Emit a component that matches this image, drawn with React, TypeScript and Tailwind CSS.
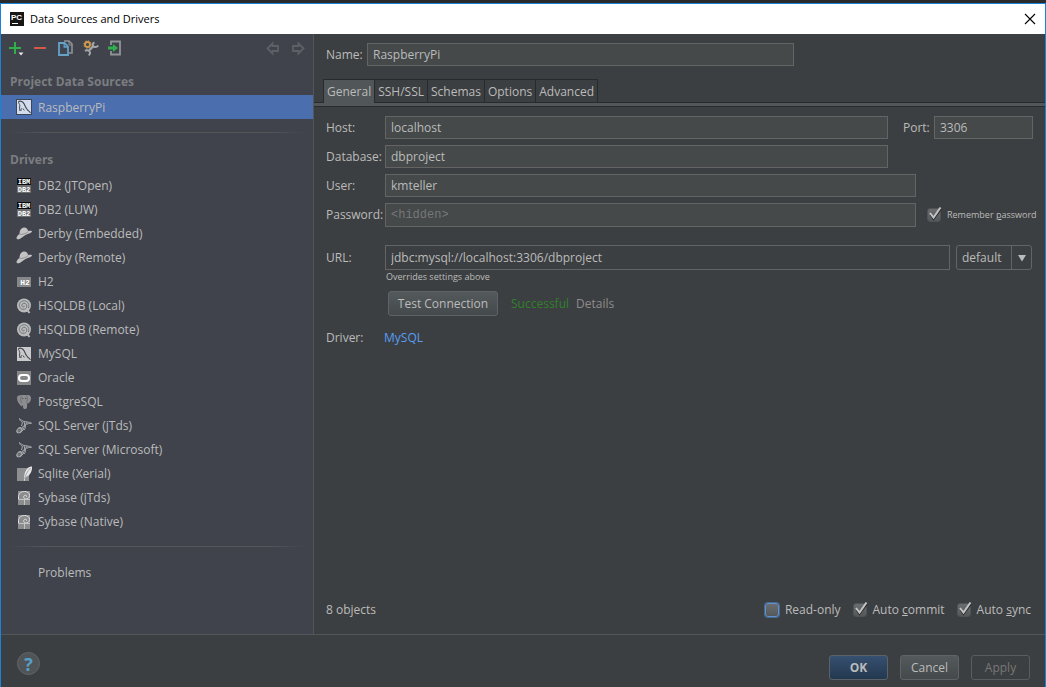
import type { ReactNode } from 'react';

const FONT = 'font-["Open_Sans","Noto_Sans",sans-serif]';

function Db2Icon() {
  return (
    <svg width="16" height="16" viewBox="0 0 16 16">
      <rect x="1" y="0" width="14" height="7" fill="#0c0c0c" />
      <rect x="1" y="7" width="14" height="8" fill="#6c6e70" />
      <text x="8" y="6" textAnchor="middle" fontSize="7" fontWeight="700" fill="#fff" fontFamily="Liberation Mono">IBM</text>
      <text x="8" y="14" textAnchor="middle" fontSize="7" fontWeight="700" fill="#fff" fontFamily="Liberation Mono">DB2</text>
    </svg>
  );
}

function DerbyIcon() {
  return (
    <svg width="16" height="16" viewBox="0 0 16 16">
      <path d="M3.500 8C3.300 5 5 2.200 7.600 1.600c2.600-.3 4 1.200 4.500 3.400 1.500-.1 3-.4 4 .2-.4 1.800-3 2.300-5.500 3.300C7.500 9.600 5 13.400 1.700 13.300-.2 13 0 10.500 3.500 8z" fill="#c3c3c3" />
      <path d="M3.600 8.300c2.800.5 6-.5 8.400-2.600" stroke="#85888b" strokeWidth=".8" fill="none" />
    </svg>
  );
}

function H2Icon() {
  return (
    <svg width="16" height="16" viewBox="0 0 16 16">
      <rect x="1" y="3" width="14" height="10" fill="#858789" />
      <text x="9" y="11" textAnchor="middle" fontSize="8" fontWeight="700" fill="#fff" fontFamily="Liberation Mono">H2</text>
    </svg>
  );
}

function HsqlIcon() {
  return (
    <svg width="16" height="16" viewBox="0 0 16 16" fill="none">
      <circle cx="8" cy="7.500" r="7" fill="#b9babb" />
      <path d="M8 7.600c.8.600-.2 1.700-1.200 1.200C5.200 8 5.700 5.400 8 5.300c2.300 0 3.300 2.200 2.600 4-.8 2.100-3.600 2.600-5.400 1.500-2.300-1.500-2.500-5-.5-6.800C7 2 10.800 2.500 12.200 5.200c.8 1.500.9 3.200.2 4.800" stroke="#707377" strokeWidth="1" />
      <path d="M11 11.500l2.500 3.500" stroke="#b9babb" strokeWidth="2" />
    </svg>
  );
}

function MySqlIcon({ selected }: { selected?: boolean }) {
  return (
    <svg width="16" height="16" viewBox="0 0 16 16" fill="none">
      {selected && <rect width="16" height="16" fill="#3b4658" />}
      <rect x="1" y="1" width="14" height="14" fill={selected ? '#d3dced' : '#c9cacc'} />
      <path d="M2.500 2.500C4.500 1.500 7 2.500 8.200 5c1 2.200 1.500 3.800 3 5.500.9 1.200 2.300 2 3.300 3.500" stroke="#404349" strokeWidth="1.100" />
      <path d="M2.500 2.500c-.2 1.500 1.200 2.500 1.300 4-.1 1.800-.6 3.500.2 5.500M5 12c-.4-1.500.2-2.500 1-2.500M7 9.500c.2 1 .8 1.500 1.500 1.700" stroke="#404349" strokeWidth="1" />
    </svg>
  );
}

function OracleIcon() {
  return (
    <svg width="16" height="16" viewBox="0 0 16 16" fill="none">
      <rect x="1" y="1" width="14" height="14" fill="#858789" />
      <rect x="3" y="5" width="10" height="6" rx="3" stroke="#fff" strokeWidth="2" />
    </svg>
  );
}

function PostgresIcon() {
  return (
    <svg width="16" height="16" viewBox="0 0 16 16">
      <path d="M1 4c0-2 1.500-3 3.500-2.800C6 .8 9 .8 10.500 1.300 13 .6 15 1.700 15 4c0 2-1 4-2 5-.8.7-1.700.4-2 .2V13c0 1.500-.9 2-2 2s-2-.5-2-2v-2.500C6.600 12 5.800 12.500 5 12 3 10 1 7 1 4z" fill="#8b8d8f" />
      <path d="M5.500 2c-1 2-.8 4.500-.2 7M10.500 2c1.500 2 .5 4.500.3 7" stroke="#63666a" strokeWidth=".8" fill="none" />
      <path d="M6.300 4.500h1M9.200 4.500h1" stroke="#404349" strokeWidth="1" />
    </svg>
  );
}

function SqlServerIcon() {
  return (
    <svg width="16" height="16" viewBox="0 0 16 16" fill="none" stroke="#a9abad" strokeWidth="1">
      <path d="M3.500.5c1 1.200 3 2.500 4.500 3 2.500.5 5 .3 7.500 1.700-2 .2-4.500.5-6.500 1.800L6 9.500M3.500.5c0 1.500 1.500 3 3 4L5.500 8M8 3.500l.8 3.500M11 4l-1.500 2.500M8.800 7c1.200 1.500.7 3.500-.7 5" />
      <path d="M6 9.500L7.800 11l-3.500 4M9.500 7l-2 3.500" />
      <ellipse cx="3.400" cy="12.300" rx="3" ry="2" transform="rotate(-45 3.400 12.300)" fill="#8f9193" />
      <path d="M1.800 12.200l2.500-1M2.200 14l2.500-1.500" stroke="#50545a" />
    </svg>
  );
}

function SqliteIcon() {
  return (
    <svg width="16" height="16" viewBox="0 0 16 16">
      <rect x="1" y="2" width="12" height="13" fill="#8c8e90" />
      <path d="M8 15c-.2-4 .2-8 2.500-11.500C12 1.200 14 .2 16 .5c.3 3-.5 6-2.800 8.500-1.200 1.300-2.700 1.500-3.700 2.500L8.500 15z" fill="#e4e4e4" />
      <path d="M8.500 13C9.500 9 11.500 5 14.500 2" stroke="#8c8e90" strokeWidth=".7" fill="none" />
    </svg>
  );
}

function SybaseIcon() {
  return (
    <svg width="16" height="16" viewBox="0 0 16 16" fill="none">
      <path d="M2 1h12v14H2z" fill="#8a8c8e" />
      <path d="M2.500 9V6.500C2.500 3.500 5 1.500 8.500 1.500c3 0 5 1.500 5 4s-2 3.800-4 3.500-2.500-2.500-1-3.500c1.200-.8 2.500 0 2 1.200" stroke="#e0e0e0" strokeWidth="1" />
      <path d="M2.500 9.500H14M8.500 9.500V15" stroke="#c2c3c4" strokeWidth="1" />
    </svg>
  );
}

const drivers: { name: string; icon: ReactNode }[] = [
  { name: 'DB2 (JTOpen)', icon: <Db2Icon /> },
  { name: 'DB2 (LUW)', icon: <Db2Icon /> },
  { name: 'Derby (Embedded)', icon: <DerbyIcon /> },
  { name: 'Derby (Remote)', icon: <DerbyIcon /> },
  { name: 'H2', icon: <H2Icon /> },
  { name: 'HSQLDB (Local)', icon: <HsqlIcon /> },
  { name: 'HSQLDB (Remote)', icon: <HsqlIcon /> },
  { name: 'MySQL', icon: <MySqlIcon /> },
  { name: 'Oracle', icon: <OracleIcon /> },
  { name: 'PostgreSQL', icon: <PostgresIcon /> },
  { name: 'SQL Server (jTds)', icon: <SqlServerIcon /> },
  { name: 'SQL Server (Microsoft)', icon: <SqlServerIcon /> },
  { name: 'Sqlite (Xerial)', icon: <SqliteIcon /> },
  { name: 'Sybase (jTds)', icon: <SybaseIcon /> },
  { name: 'Sybase (Native)', icon: <SybaseIcon /> },
];

const tabs = ['General', 'SSH/SSL', 'Schemas', 'Options', 'Advanced'];

const inputClass =
  'min-w-0 flex-1 border border-[#646464] bg-[#45494a] px-[5px] text-[#bbbbbb] outline-none placeholder:text-[#777777]';

function Toolbar() {
  return (
    <div className="flex h-7 items-center gap-[9px] pl-[7px] pr-2">
      <button aria-label="Add">
        <svg width="16" height="16" viewBox="0 0 16 16">
          <path d="M7 2v12M1 8h12" stroke="#2eb04b" strokeWidth="2" />
          <path d="M10.500 12.500h5L13 15.500z" fill="#e6e6e6" />
        </svg>
      </button>
      <button aria-label="Remove">
        <svg width="16" height="16" viewBox="0 0 16 16">
          <path d="M1 8h12" stroke="#d25849" strokeWidth="2" />
        </svg>
      </button>
      <button aria-label="Duplicate">
        <svg width="16" height="16" viewBox="0 0 16 16" fill="none">
          <path d="M6 1h5l3 3v9h-3" stroke="#8f9396" strokeWidth="1.600" />
          <path d="M11 1v4h3" stroke="#8f9396" strokeWidth="1" />
          <path d="M1 3h5.500L10 6.500V15H1z" fill="#3f4650" stroke="#64a2c8" strokeWidth="1.800" />
          <path d="M6.200 3v4H10" stroke="#64a2c8" strokeWidth="1.300" />
        </svg>
      </button>
      <button aria-label="Driver settings">
        <svg width="16" height="16" viewBox="0 0 16 16" fill="none">
          <circle cx="4.500" cy="4.500" r="2.500" stroke="#d09a4e" strokeWidth="1.800" />
          <circle cx="4.500" cy="4.500" r="3.700" stroke="#d09a4e" strokeWidth="1" strokeDasharray="1.450 1.450" />
          <path d="M11.500 2.500c-1.800.6-2.200 2.400-1.300 3.600 1.200 1.500 4 1.300 5-.6" stroke="#a5a8aa" strokeWidth="2" />
          <path d="M10.500 6L6.500 10" stroke="#a5a8aa" strokeWidth="2.400" />
          <path d="M2 10.800c1.500-1 3.800-.8 4.600.6.800 1.300.3 3-1 3.800" stroke="#a5a8aa" strokeWidth="2" />
        </svg>
      </button>
      <button aria-label="Import">
        <svg width="16" height="16" viewBox="0 0 16 16" fill="none">
          <path d="M3 5V1.500h9v13H3V11" stroke="#909396" strokeWidth="1.800" />
          <path d="M0 8h5" stroke="#2eb04b" strokeWidth="3" />
          <path d="M5 4l5 4-5 4z" fill="#2eb04b" />
        </svg>
      </button>
      <div className="ml-auto flex gap-[9px]">
        <button aria-label="Back">
          <svg width="16" height="16" viewBox="0 0 16 16" fill="none" stroke="#5d6064" strokeWidth="1.800">
            <path d="M3.500 8.500l5-5V6H14v5H8.500v2.500z" />
          </svg>
        </button>
        <button aria-label="Forward">
          <svg width="16" height="16" viewBox="0 0 16 16" fill="none" stroke="#5d6064" strokeWidth="1.800">
            <path d="M14.500 8.500l-5-5V6H4v5h5.500v2.500z" />
          </svg>
        </button>
      </div>
    </div>
  );
}

function Separator() {
  return <div className="mx-2 h-px bg-[linear-gradient(to_right,transparent,#55565a_12%,#55565a_88%,transparent)]" />;
}

function Sidebar() {
  return (
    <aside className="w-[313px] shrink-0 border-r border-[#535557] bg-[#40434c]">
      <Toolbar />
      <h2 className="flex h-[33px] items-center pl-[9px] pt-[6px] font-bold text-[#7b7d80]">
        Project Data Sources
      </h2>
      <a href="#raspberrypi" className="flex h-6 items-center gap-[6px] bg-[#4b6eaf] pl-[15px]">
        <MySqlIcon selected />
        <span className="pt-px">RaspberryPi</span>
      </a>
      <div className="pt-[13px]">
        <Separator />
      </div>
      <h2 className="flex h-[41px] items-center pl-[9px] pt-[13px] font-bold text-[#7b7d80]">
        Drivers
      </h2>
      <ul>
        {drivers.map((driver) => (
          <li key={driver.name}>
            <a href="#driver" className="flex h-6 items-center gap-[6px] pl-[15px]">
              {driver.icon}
              {driver.name}
            </a>
          </li>
        ))}
      </ul>
      <div className="pt-3">
        <Separator />
      </div>
      <a href="#problems" className="mt-[14px] flex h-6 items-center pl-[37px]">
        Problems
      </a>
    </aside>
  );
}

function Checkbox({ checked, focused, children }: { checked?: boolean; focused?: boolean; children: ReactNode }) {
  return (
    <label className="flex items-center gap-[6px]">
      <span className="relative h-[14px] w-[14px] shrink-0">
        <input
          type="checkbox"
          defaultChecked={checked}
          className={`peer block h-[14px] w-[14px] appearance-none rounded-[3px] border bg-linear-to-b from-[#6a6d6f] to-[#55585a] ${
            focused ? 'border-[#6291c9] ring-1 ring-[#466a96]' : 'border-[#505355]'
          }`}
        />
        <svg width="16" height="16" viewBox="0 0 16 16" fill="none" className="pointer-events-none absolute -top-[2px] left-0 hidden peer-checked:block">
          <path d="M3.500 8.500l3 4.500L14 3" stroke="#2b2d2e" strokeWidth="2" />
          <path d="M3 7l3.500 4.500L13.500 1.500" stroke="#c4c4c4" strokeWidth="2" />
        </svg>
      </span>
      <span>{children}</span>
    </label>
  );
}

function DataSourceForm() {
  return (
    <main className="flex min-w-0 flex-1 flex-col">
      <div className="flex items-center pl-3 pr-[251px] pt-[9px]">
        <label htmlFor="name" className="w-[41px] shrink-0">Name:</label>
        <input id="name" className={`h-[23px] ${inputClass}`} defaultValue="RaspberryPi" />
      </div>

      <div role="tablist" className="mt-[13px] flex h-6 border-b border-[#282a2b] pl-[9px]">
        {tabs.map((tab, i) => (
          <button
            key={tab}
            role="tab"
            aria-selected={i === 0}
            className={`-mb-px border-t border-r border-[#282a2b] px-[3px] pt-px first:border-l ${
              i === 0 ? 'bg-[#515658]' : 'border-b'
            }`}
          >
            {tab}
          </button>
        ))}
      </div>
      <div className="h-1 border-b border-[#282a2b] bg-[#515658]" />

      <div className="flex flex-col gap-[6px] pl-3 pr-3 pt-[9px]">
        <div className="flex items-center">
          <label htmlFor="host" className="w-[59px] shrink-0">Host:</label>
          <input id="host" className={`h-[23px] ${inputClass}`} defaultValue="localhost" />
          <div className="flex w-[145px] shrink-0 items-center pl-[15px]">
            <label htmlFor="port" className="w-[31px] shrink-0">Port:</label>
            <input id="port" className={`h-[23px] ${inputClass}`} defaultValue="3306" />
          </div>
        </div>
        <div className="flex items-center pr-[145px]">
          <label htmlFor="database" className="w-[59px] shrink-0">Database:</label>
          <input id="database" className={`h-[23px] ${inputClass}`} defaultValue="dbproject" />
        </div>
        <div className="flex items-center pr-[117px]">
          <label htmlFor="user" className="w-[59px] shrink-0">User:</label>
          <input id="user" className={`h-[23px] ${inputClass}`} defaultValue="kmteller" />
        </div>
        <div className="flex items-center">
          <label htmlFor="password" className="w-[59px] shrink-0">Password:</label>
          <input
            id="password"
            type="password"
            placeholder="<hidden>"
            className={`h-6 font-["Liberation_Mono",monospace] ${inputClass}`}
          />
          <div className="w-[117px] shrink-0 whitespace-nowrap pl-[11px] text-[9px]">
            <Checkbox checked>
              Remember <u>p</u>assword
            </Checkbox>
          </div>
        </div>
      </div>

      <div className="mt-[18px] flex items-center pl-3 pr-[13px]">
        <label htmlFor="url" className="w-[59px] shrink-0">URL:</label>
        <input
          id="url"
          className="h-[25px] min-w-0 flex-1 border border-[#646464] px-[5px] text-[#bbbbbb] outline-none"
          defaultValue="jdbc:mysql://localhost:3306/dbproject"
        />
        <div className="relative ml-[6px] w-[76px] shrink-0">
          <select
            aria-label="URL template"
            className="block h-[25px] w-full appearance-none rounded-[3px] border border-[#646464] pl-[5px] outline-none"
          >
            <option>default</option>
          </select>
          <span className="pointer-events-none absolute inset-y-0 right-0 flex w-[21px] items-center justify-center border-l border-[#646464]">
            <svg width="10" height="8" viewBox="0 0 10 8">
              <path d="M1 1h8L5 7.500z" fill="#bbbbbb" />
            </svg>
          </span>
        </div>
      </div>
      <p className="pl-[72px] text-[9px] leading-[14px]">Overrides settings above</p>

      <div className="mt-[7px] flex items-center pl-[74px]">
        <button className="h-[25px] w-[110px] rounded-[3px] border border-[#5f6365] bg-linear-to-b from-[#54595b] to-[#44494b]">
          Test Connection
        </button>
        <span className="ml-[13px] text-[#31802b]">Successful</span>
        <a href="#details" className="ml-[7px] text-[#8c8c8c]">Details</a>
      </div>

      <div className="mt-[14px] flex items-center pl-3">
        <span className="w-[58px]">Driver:</span>
        <a href="#mysql" className="text-[#589df6]">MySQL</a>
      </div>

      <div className="mt-auto flex items-center pb-4 pl-3 pr-[14px]">
        <span>8 objects</span>
        <div className="ml-auto flex gap-3">
          <Checkbox focused>Read-only</Checkbox>
          <Checkbox checked>
            Auto <u>c</u>ommit
          </Checkbox>
          <Checkbox checked>
            Auto <u>s</u>ync
          </Checkbox>
        </div>
      </div>
    </main>
  );
}

export default function App() {
  return (
    <div className={`flex min-h-screen flex-col bg-[#2b2b2b] pt-[3px] text-[12px] leading-4 text-[#bbbbbb] ${FONT}`}>
      <div className="flex flex-1 flex-col border-x border-t border-[#1883d7] bg-[#3c3f41]">
        <header className="flex h-[30px] items-center bg-white pl-[9px] pr-2 text-black">
          <svg width="14" height="14" viewBox="0 0 14 14">
            <rect width="14" height="14" fill="#161616" />
            <text x="1" y="8" fontSize="8" fontWeight="700" fill="#fff" fontFamily="Liberation Sans">PC</text>
            <path d="M2 11.500h6" stroke="#fff" strokeWidth="1" />
          </svg>
          <h1 className="ml-[6px] text-[11px]">Data Sources and Drivers</h1>
          <button aria-label="Close" className="ml-auto">
            <svg width="14" height="14" viewBox="0 0 14 14">
              <path d="M2 2l10 10M12 2L2 12" stroke="#000" strokeWidth="1.100" />
            </svg>
          </button>
        </header>

        <div className="flex flex-1">
          <Sidebar />
          <DataSourceForm />
        </div>

        <footer className="flex h-[53px] items-start justify-between border-t border-[#535557] pl-4 pr-[15px] pt-[17px]">
          <button
            aria-label="Help"
            className="h-[23px] w-[23px] rounded-full border border-[#626567] bg-[#505456] text-[18px] leading-5 font-bold text-[#55a0c8]"
          >
            ?
          </button>
          <div className="flex gap-3 pt-[3px]">
            <button className="h-[25px] w-[59px] rounded-[3px] border border-[#5b6268] bg-linear-to-b from-[#365070] to-[#243850] font-bold">
              OK
            </button>
            <button className="h-[25px] w-[59px] rounded-[3px] border border-[#5f6365] bg-linear-to-b from-[#54595b] to-[#44494b]">
              Cancel
            </button>
            <button className="h-[25px] w-[59px] rounded-[3px] border border-[#5a5d5f] text-[#777777]">
              Apply
            </button>
          </div>
        </footer>
      </div>
    </div>
  );
}
